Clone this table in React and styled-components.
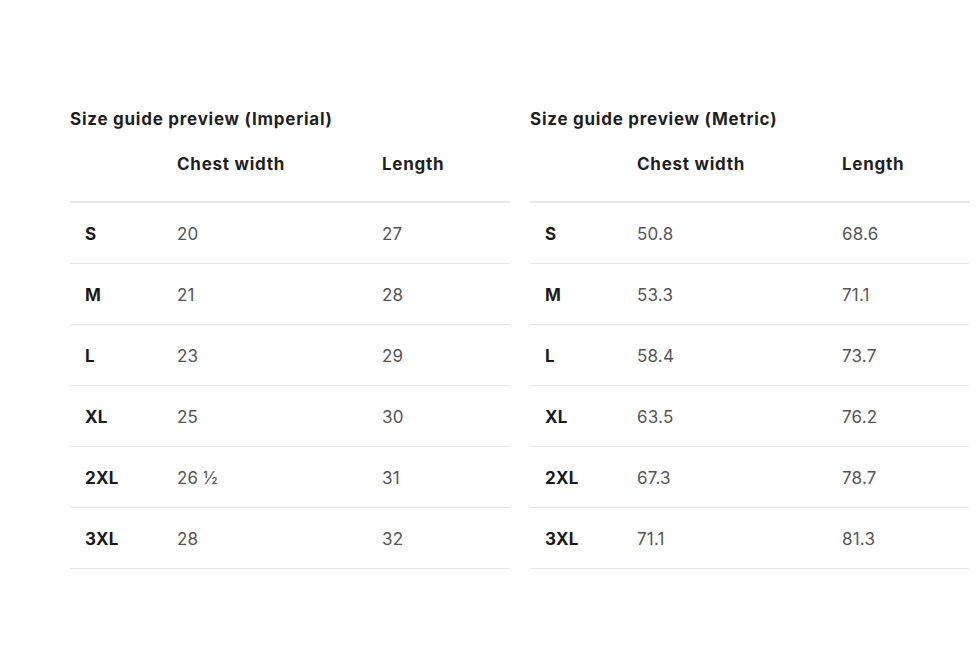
import React from "react";
import styled, { createGlobalStyle } from "styled-components";

const imperial = [
  { size: "S", chest: "20", length: "27" },
  { size: "M", chest: "21", length: "28" },
  { size: "L", chest: "23", length: "29" },
  { size: "XL", chest: "25", length: "30" },
  { size: "2XL", chest: "26 ½", length: "31" },
  { size: "3XL", chest: "28", length: "32" },
];

const metric = [
  { size: "S", chest: "50.8", length: "68.6" },
  { size: "M", chest: "53.3", length: "71.1" },
  { size: "L", chest: "58.4", length: "73.7" },
  { size: "XL", chest: "63.5", length: "76.2" },
  { size: "2XL", chest: "67.3", length: "78.7" },
  { size: "3XL", chest: "71.1", length: "81.3" },
];

const GlobalStyle = createGlobalStyle`
  body {
    margin: 0;
    background: #fff;
    font-family: "Inter", "Lato", sans-serif;
    color: #222;
  }
`;

const Page = styled.div`
  display: grid;
  grid-template-columns: 440px 439px;
  column-gap: 20px;
  padding: 107px 0 0 70px;
`;

const Section = styled.div`
  display: flex;
  flex-direction: column;
`;

const Title = styled.h3`
  margin: 0;
  font-size: 17px;
  font-weight: 700;
  line-height: 24px;
  color: #1f1f1f;
  letter-spacing: 0.75px;
`;

const Grid = styled.div`
  display: grid;
  grid-template-columns: 107px 205px 1fr;
`;

const HeadRow = styled(Grid)`
  height: 50px;
  padding-top: 20px;
  border-bottom: 2px solid #e6e6e6;
  box-sizing: content-box;
`;

const HeadCell = styled.div`
  font-size: 17px;
  font-weight: 700;
  line-height: 26px;
  color: #1f1f1f;
  letter-spacing: 0.75px;
`;

const Row = styled(Grid)`
  height: 60px;
  align-items: center;
  border-bottom: 1px solid #e6e6e6;
`;

const Cell = styled.div`
  font-size: 17px;
  line-height: 24px;
  padding-top: 2px;
  padding-left: ${(p) => (p.$label ? "15px" : "0")};
  font-weight: ${(p) => (p.$label ? 700 : 400)};
  color: ${(p) => (p.$label ? "#1a1a1a" : "#555")};
  letter-spacing: ${(p) => (p.$label ? "0.3px" : "0.2px")};
`;

const SizeTable = ({ title, rows }) => (
  <Section>
    <Title>{title}</Title>
    <HeadRow>
      <HeadCell />
      <HeadCell>Chest width</HeadCell>
      <HeadCell>Length</HeadCell>
    </HeadRow>
    {rows.map((r) => (
      <Row key={r.size}>
        <Cell $label>{r.size}</Cell>
        <Cell>{r.chest}</Cell>
        <Cell>{r.length}</Cell>
      </Row>
    ))}
  </Section>
);

export default function App() {
  return (
    <>
      <GlobalStyle />
      <Page>
        <SizeTable title="Size guide preview (Imperial)" rows={imperial} />
        <SizeTable title="Size guide preview (Metric)" rows={metric} />
      </Page>
    </>
  );
}
